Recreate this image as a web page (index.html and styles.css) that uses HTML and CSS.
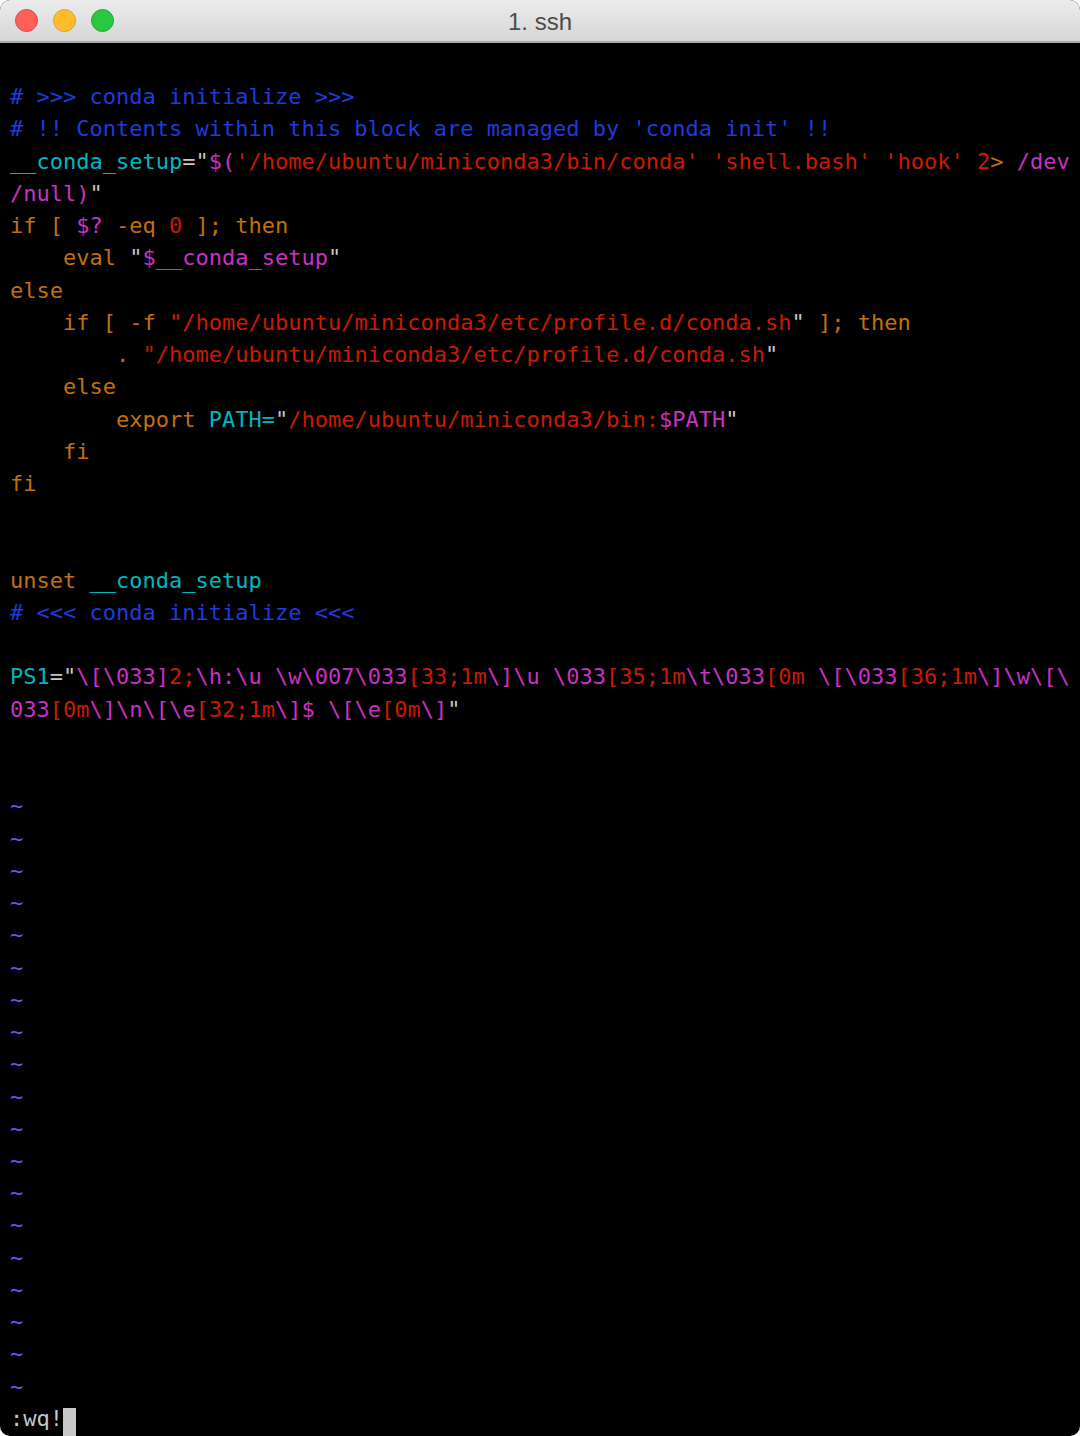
FILE: index.html
```html
<!DOCTYPE html>
<html lang="en">
<head>
  <meta charset="UTF-8" />
  <title>1. ssh</title>
  <link rel="stylesheet" href="styles.css">
</head>
<body>

  <div class="window">
    <div class="titlebar">
      <div class="lights">
        <span class="light red"></span>
        <span class="light yellow"></span>
        <span class="light green"></span>
      </div>
      <div class="title">1. ssh</div>
    </div>

    <!-- vim buffer -->
<pre class="term">

<span class="c"># &gt;&gt;&gt; conda initialize &gt;&gt;&gt;</span>
<span class="c"># !! Contents within this block are managed by 'conda init' !!</span>
<span class="v">__conda_setup</span>="<span class="m">$(</span><span class="s">'/home/ubuntu/miniconda3/bin/conda' 'shell.bash' 'hook' 2</span><span class="k">&gt;</span> <span class="m">/dev</span>
<span class="m">/null)</span>"
<span class="k">if [ </span><span class="m">$?</span><span class="k"> -eq </span><span class="s">0</span><span class="k"> ]; then</span>
    <span class="k">eval </span>"<span class="m">$__conda_setup</span>"
<span class="k">else</span>
    <span class="k">if [ -f </span><span class="s">"/home/ubuntu/miniconda3/etc/profile.d/conda.sh</span>"<span class="k"> ]; then</span>
        <span class="k">. </span><span class="s">"/home/ubuntu/miniconda3/etc/profile.d/conda.sh</span>"
    <span class="k">else</span>
        <span class="k">export </span><span class="v">PATH=</span>"<span class="s">/home/ubuntu/miniconda3/bin:</span><span class="m">$PATH</span>"
    <span class="k">fi</span>
<span class="k">fi</span>


<span class="k">unset</span> <span class="v">__conda_setup</span>
<span class="c"># &lt;&lt;&lt; conda initialize &lt;&lt;&lt;</span>

<span class="v">PS1</span>="<span class="m">\[\033]</span><span class="s">2;</span><span class="m">\h:\u \w\007\033</span><span class="s">[33;1m</span><span class="m">\]\u \033</span><span class="s">[35;1m</span><span class="m">\t\033</span><span class="s">[0m</span> <span class="m">\[\033</span><span class="s">[36;1m</span><span class="m">\]\w\[\</span>
<span class="m">033</span><span class="s">[0m</span><span class="m">\]\n\[\e</span><span class="s">[32;1m</span><span class="m">\]$ \[\e</span><span class="s">[0m</span><span class="m">\]</span>"


<span class="t">~</span>
<span class="t">~</span>
<span class="t">~</span>
<span class="t">~</span>
<span class="t">~</span>
<span class="t">~</span>
<span class="t">~</span>
<span class="t">~</span>
<span class="t">~</span>
<span class="t">~</span>
<span class="t">~</span>
<span class="t">~</span>
<span class="t">~</span>
<span class="t">~</span>
<span class="t">~</span>
<span class="t">~</span>
<span class="t">~</span>
<span class="t">~</span>
<span class="t">~</span>
:wq!<span class="cursor"> </span></pre>
  </div>

</body>
</html>
```

FILE: styles.css
```css
html, body {
  margin: 0;
  padding: 0;
  background: #fff;
}
.window {
  width: 1080px;
  height: 1436px;
  background: #000;
  border-radius: 10px;
  overflow: hidden;
  display: flex;
  flex-direction: column;
}
.titlebar {
  height: 41px;
  flex: none;
  background: linear-gradient(#ececec, #d6d6d6);
  border-bottom: 2px solid #a9a9a9;
  display: flex;
  align-items: center;
  position: relative;
}
.lights {
  display: flex;
  gap: 15px;
  padding-left: 15px;
}
.light {
  width: 23px;
  height: 23px;
  border-radius: 50%;
  box-sizing: border-box;
}
.red { background: #fe5f57; border: 1px solid #e2463f; }
.yellow { background: #febc2e; border: 1px solid #e1a116; }
.green { background: #28c840; border: 1px solid #14ae2a; }
.title {
  position: absolute;
  left: 0;
  right: 0;
  top: 0;
  height: 41px;
  line-height: 43px;
  text-align: center;
  font-family: "Liberation Sans", Arial, sans-serif;
  font-size: 24px;
  color: #4b4b4b;
}
.term {
  margin: 0;
  padding: 6px 10px 0;
  font-family: "DejaVu Sans Mono", monospace;
  font-size: 22px;
  line-height: 32.24px;
  color: #c7c7c7;
  white-space: pre;
}
.c { color: #1f3bdb; }
.s { color: #c91b00; }
.k { color: #c0700f; }
.v { color: #00b6bf; }
.m { color: #c732c2; }
.t { color: #5b5bff; }
.cursor {
  display: inline-block;
  width: 13px;
  height: 28px;
  background: #c8c8c8;
  vertical-align: -5px;
}
```
